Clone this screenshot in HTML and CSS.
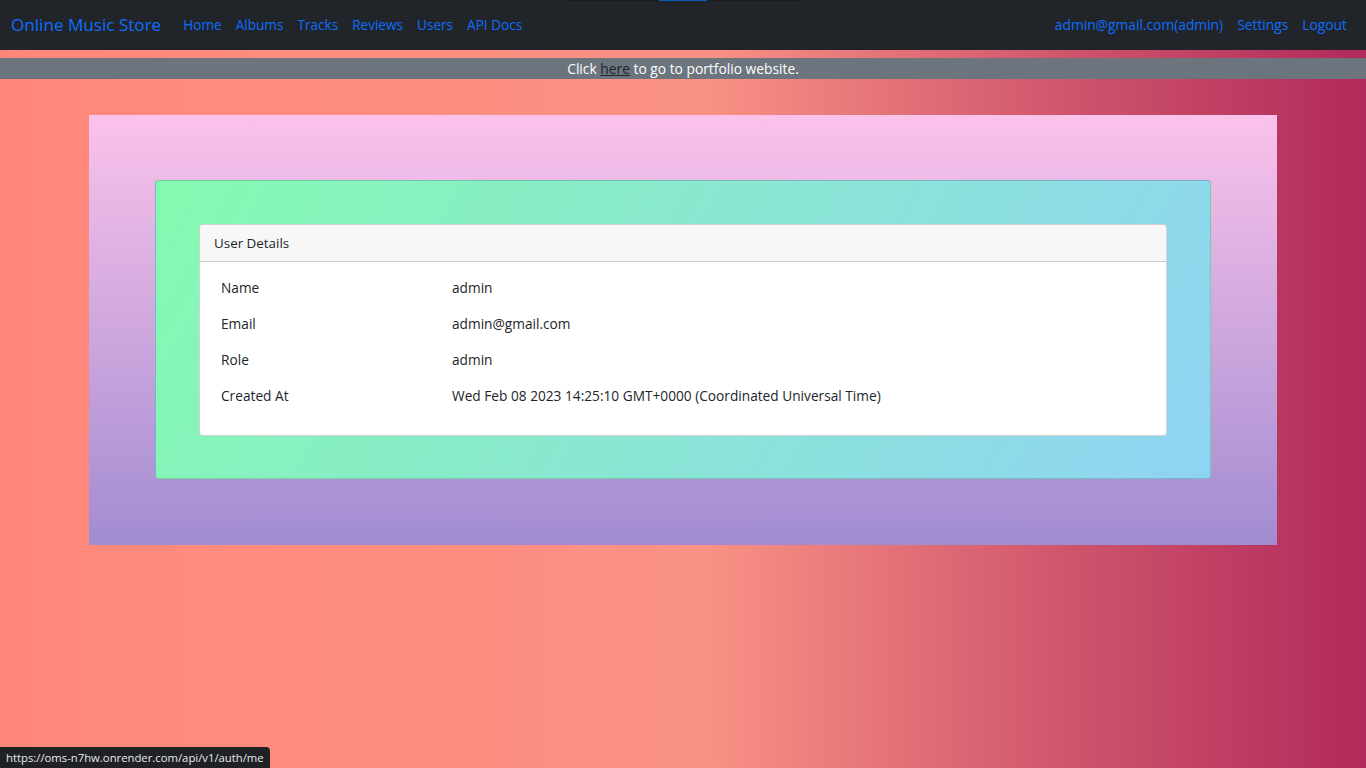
FILE: index.html
```html
<!DOCTYPE html>
<html lang="en">
<head>
<meta charset="utf-8">
<title>Online Music Store</title>
<link rel="stylesheet" href="styles.css">
</head>
<body>
<nav class="navbar">
  <div class="nav-left">
    <a class="brand" href="#">Online Music Store</a>
    <ul class="nav-links">
      <li><a href="#">Home</a></li>
      <li><a href="#">Albums</a></li>
      <li><a href="#">Tracks</a></li>
      <li><a href="#">Reviews</a></li>
      <li><a href="#">Users</a></li>
      <li><a href="#">API Docs</a></li>
    </ul>
  </div>
  <ul class="nav-links nav-right">
    <li><a href="#">admin@gmail.com(admin)</a></li>
    <li><a href="#">Settings</a></li>
    <li><a href="#">Logout</a></li>
  </ul>
  <div class="top-indicator"><span class="top-indicator-active"></span></div>
</nav>

<div class="banner">Click <a href="#">here</a> to go to portfolio website.</div>

<main class="outer">
  <section class="inner">
    <div class="card">
      <div class="card-header">User Details</div>
      <div class="card-body">
        <table class="details">
          <tbody>
            <tr><td class="label">Name</td><td>admin</td></tr>
            <tr><td class="label">Email</td><td>admin@gmail.com</td></tr>
            <tr><td class="label">Role</td><td>admin</td></tr>
            <tr><td class="label">Created At</td><td>Wed Feb 08 2023 14:25:10 GMT+0000 (Coordinated Universal Time)</td></tr>
          </tbody>
        </table>
      </div>
    </div>
  </section>
</main>

<div class="status-bar">https://oms-n7hw.onrender.com/api/v1/auth/me</div>
</body>
</html>
```

FILE: styles.css
```css
* { box-sizing: border-box; }

html, body { height: 100%; }

body {
  margin: 0;
  min-height: 768px;
  font-family: "Open Sans", "Noto Sans", sans-serif;
  color: #212529;
  background: linear-gradient(to right, #ff8177 0%, #ff867a 0%, #ff8c7f 21%, #f99185 52%, #cf556c 78%, #b12a5b 100%);
}

a { text-decoration: none; }

.navbar {
  position: relative;
  height: 50px;
  background: #212529;
  display: flex;
  align-items: center;
  justify-content: space-between;
  padding: 0 12px 2px 11px;
}

.nav-left {
  display: flex;
  align-items: center;
}

.brand {
  color: #0d6efd;
  font-size: 17.1px;
  margin-right: 15px;
}

.nav-links {
  list-style: none;
  margin: 0;
  padding: 0;
  display: flex;
}

.nav-links a {
  display: block;
  color: #0d6efd;
  font-size: 13.6px;
  padding: 6px 7px;
}

.nav-right a {
  font-size: 13.8px;
}

.top-indicator {
  position: absolute;
  top: 0;
  left: 563px;
  width: 240px;
  height: 1px;
  background: #1a1d20;
}

.top-indicator-active {
  position: absolute;
  top: 0;
  left: 96px;
  width: 48px;
  height: 1px;
  background: #0b5fb8;
}

.banner {
  margin-top: 8px;
  height: 21px;
  line-height: 22px;
  background: #6c757d;
  color: #fff;
  text-align: center;
  font-size: 13.8px;
}

.banner a {
  color: #212529;
  text-decoration: underline;
}

.outer {
  margin: 36px 89px 0;
  height: 430px;
  padding: 65px 66px;
  background: linear-gradient(to top, #a18cd1 0%, #fbc2eb 100%);
}

.inner {
  height: 299px;
  padding: 43px;
  border: 1px solid rgba(0, 0, 0, 0.15);
  border-radius: 4px;
  background: linear-gradient(120deg, #84fab0 0%, #8fd3f4 100%);
}

.card {
  background: #fff;
  border: 1px solid rgba(0, 0, 0, 0.175);
  border-radius: 4px;
  overflow: hidden;
}

.card-header {
  height: 37px;
  line-height: 36px;
  padding: 0 14px;
  background: #f7f7f7;
  border-bottom: 1px solid rgba(0, 0, 0, 0.175);
  font-size: 13.4px;
}

.card-body {
  padding: 7px 21px 22px;
}

.details {
  border-collapse: collapse;
  font-size: 13.7px;
}

.details td {
  height: 36px;
  padding: 0;
  vertical-align: middle;
}

.details .label {
  width: 231px;
}

.status-bar {
  position: fixed;
  left: 0;
  bottom: 0;
  height: 21px;
  line-height: 21px;
  padding: 0 6px;
  background: #202124;
  color: #e8eaed;
  font-size: 11.3px;
  border-top-right-radius: 4px;
}
```
